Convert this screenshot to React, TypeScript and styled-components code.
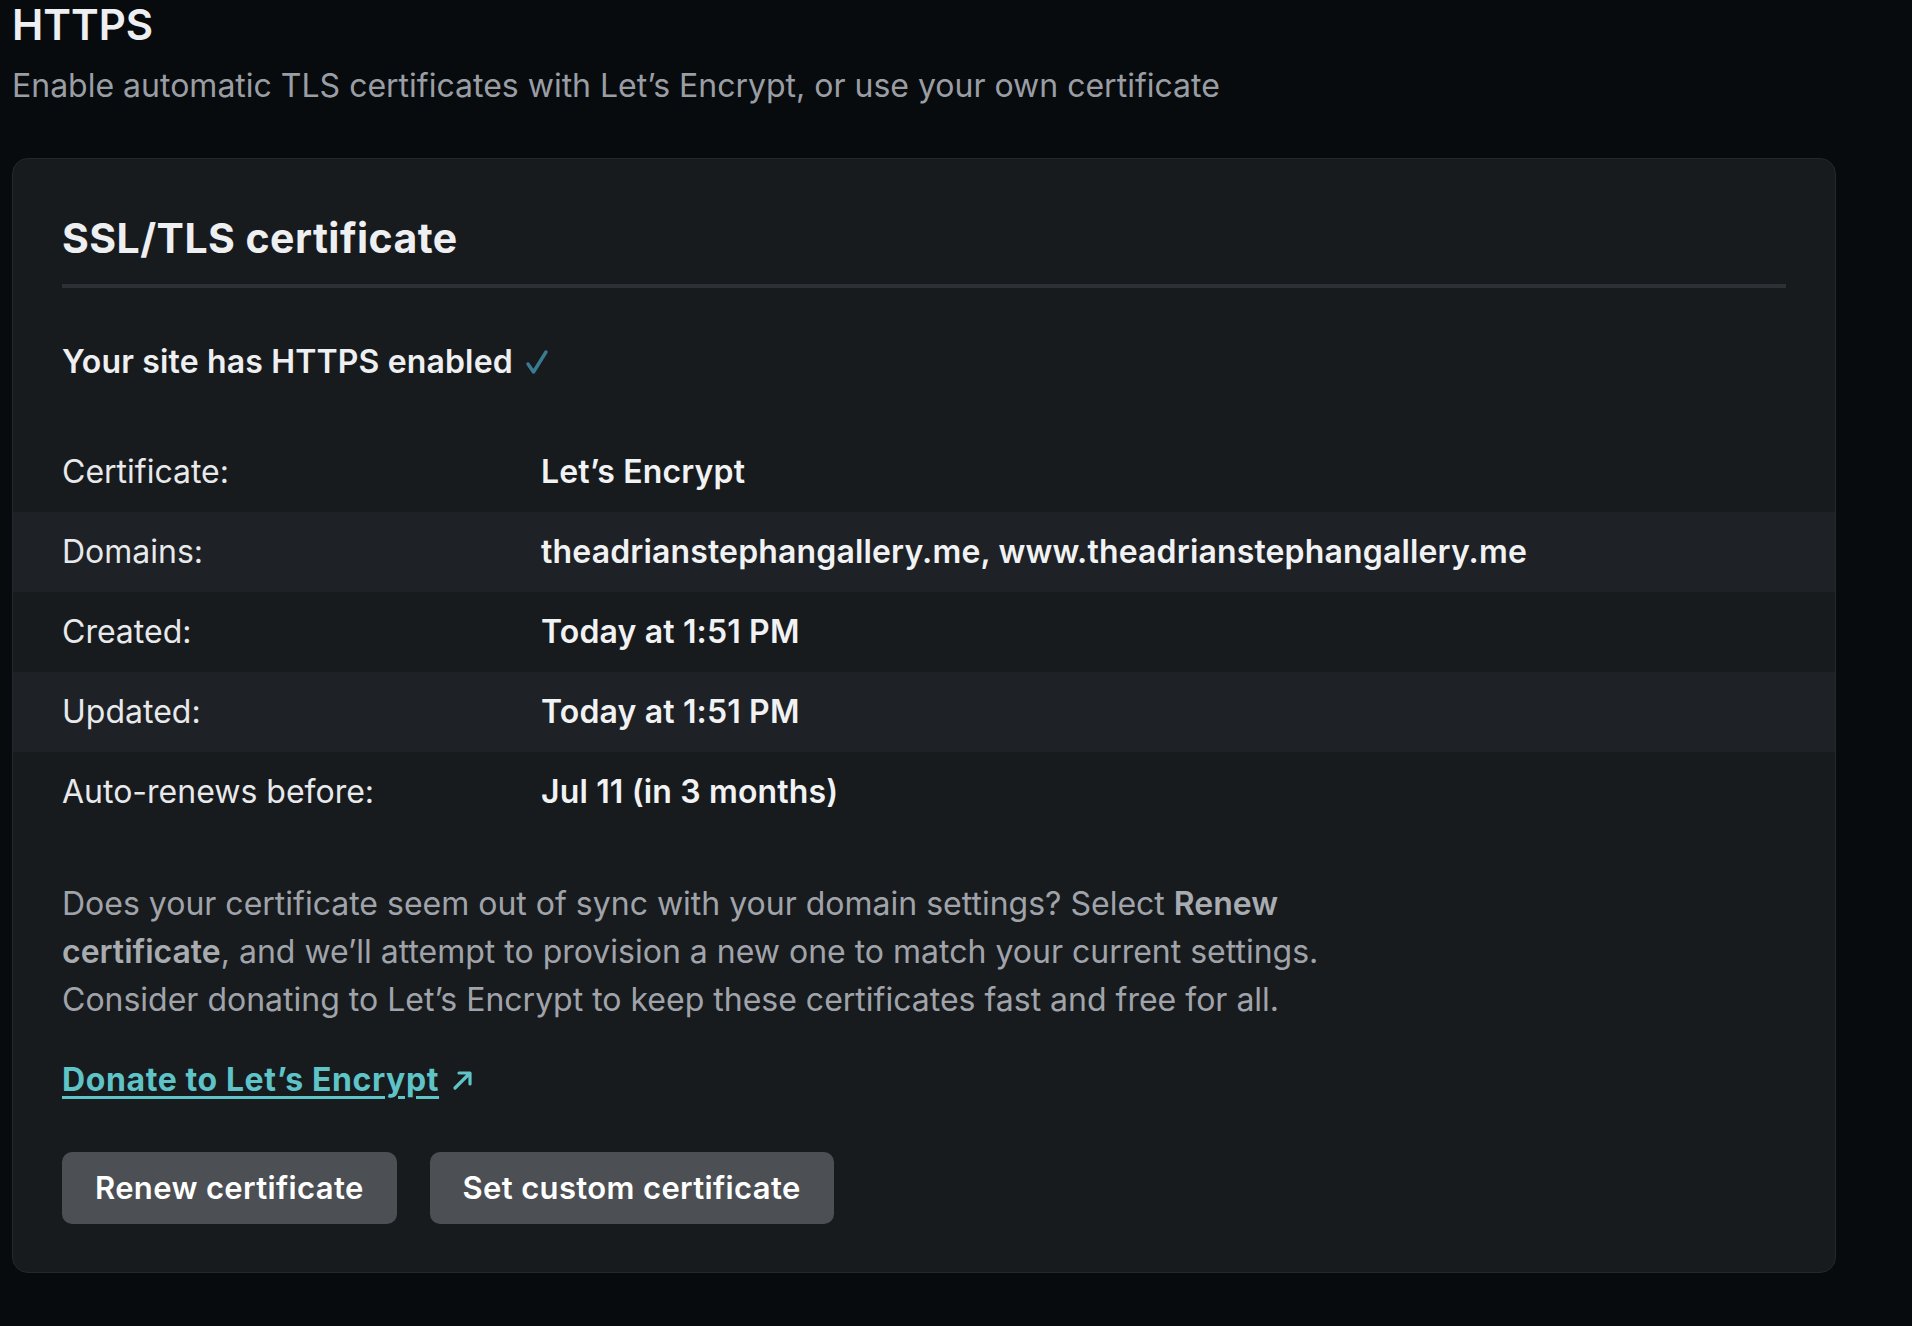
import React from "react";
import styled, { createGlobalStyle } from "styled-components";

const GlobalStyle = createGlobalStyle`
  html, body {
    margin: 0;
    padding: 0;
    background: #080b0e;
  }
  body {
    font-family: Inter, "Noto Sans", "Liberation Sans", sans-serif;
    color: #eeeff1;
    -webkit-font-smoothing: antialiased;
  }
  * { box-sizing: border-box; }
`;

const Page = styled.main`
  min-height: 1326px;
  padding: 0 76px 0 12px;
  background: #080b0e;
`;

const PageTitle = styled.h1`
  margin: 0;
  font-size: 42px;
  line-height: 50px;
  font-weight: 600;
  color: #eeeff1;
`;

const PageSubtitle = styled.p`
  margin: 12px 0 0;
  font-size: 32px;
  line-height: 48px;
  font-weight: 400;
  color: #9a9ea4;
`;

const Card = styled.section`
  margin-top: 48px;
  background: #181b1e;
  border: 1px solid #24272b;
  border-radius: 16px;
  padding: 56px 49px 48px;
`;

const CardTitle = styled.h2`
  margin: 0;
  font-size: 41px;
  line-height: 46px;
  font-weight: 700;
  letter-spacing: 0.45px;
  color: #eeeff1;
`;

const Divider = styled.hr`
  margin: 23px 0 0;
  border: none;
  height: 4px;
  background: #2d3034;
`;

const Status = styled.p`
  margin: 50px 0 0;
  display: flex;
  align-items: center;
  font-size: 32px;
  line-height: 48px;
  font-weight: 600;
  letter-spacing: 0.15px;
  color: #eeeff1;
`;

const CheckIcon = styled.svg`
  width: 24px;
  height: 26px;
  margin-left: 12px;
  flex: none;
`;

const DetailList = styled.dl`
  margin: 46px -49px 0;
  padding: 0;
`;

const DetailRow = styled.div<{ $striped?: boolean }>`
  display: grid;
  grid-template-columns: 479px 1fr;
  align-items: center;
  height: 80px;
  padding: 0 49px;
  background: ${(p) => (p.$striped ? "#1e2125" : "transparent")};
`;

const DetailLabel = styled.dt`
  margin: 0;
  font-size: 32px;
  line-height: 48px;
  font-weight: 400;
  color: #e8e9eb;
`;

const DetailValue = styled.dd`
  margin: 0;
  font-size: 32px;
  line-height: 48px;
  font-weight: 600;
  letter-spacing: 0.15px;
  color: #f1f2f3;
`;

const Explanation = styled.p`
  margin: 48px 0 0;
  max-width: 1340px;
  font-size: 32px;
  line-height: 48px;
  font-weight: 400;
  color: #a0a4aa;

  strong {
    font-weight: 600;
    color: #a8acb1;
  }
`;

const LinkLine = styled.div`
  display: flex;
  margin-top: 32px;
`;

const DonateLink = styled.a`
  display: inline-flex;
  align-items: center;
  gap: 12px;
  font-size: 32px;
  line-height: 48px;
  font-weight: 700;
  letter-spacing: 0.6px;
  color: #5ec4c8;
  text-decoration: none;
`;

const LinkText = styled.span`
  text-decoration: underline;
  text-decoration-thickness: 3px;
  text-underline-offset: 5px;
`;

const ArrowIcon = styled.svg`
  width: 24px;
  height: 24px;
  flex: none;
`;

const ButtonRow = styled.div`
  margin-top: 48px;
  display: flex;
  gap: 33px;
`;

const Button = styled.button`
  height: 72px;
  padding: 0 33px;
  border: none;
  border-radius: 10px;
  background: #4c4f54;
  color: #ffffff;
  font-family: inherit;
  font-size: 31px;
  font-weight: 600;
  letter-spacing: 0.35px;
  line-height: 72px;
  cursor: pointer;
`;

const details: { label: string; value: string }[] = [
  { label: "Certificate:", value: "Let\u2019s Encrypt" },
  {
    label: "Domains:",
    value: "theadrianstephangallery.me, www.theadrianstephangallery.me",
  },
  { label: "Created:", value: "Today at 1:51 PM" },
  { label: "Updated:", value: "Today at 1:51 PM" },
  { label: "Auto-renews before:", value: "Jul 11 (in 3 months)" },
];

export default function App() {
  return (
    <>
      <GlobalStyle />
      <Page>
        <PageTitle>HTTPS</PageTitle>
        <PageSubtitle>
          Enable automatic TLS certificates with Let’s Encrypt, or use your own
          certificate
        </PageSubtitle>
        <Card>
          <CardTitle>SSL/TLS certificate</CardTitle>
          <Divider />
          <Status>
            Your site has HTTPS enabled
            <CheckIcon viewBox="0 0 24 26" fill="none">
              <path
                d="M3 15 L8.5 23 L21 3"
                stroke="#3a7b93"
                strokeWidth="3.4"
                strokeLinecap="round"
                strokeLinejoin="round"
              />
            </CheckIcon>
          </Status>
          <DetailList>
            {details.map((d, i) => (
              <DetailRow key={d.label} $striped={i % 2 === 1}>
                <DetailLabel>{d.label}</DetailLabel>
                <DetailValue>{d.value}</DetailValue>
              </DetailRow>
            ))}
          </DetailList>
          <Explanation>
            Does your certificate seem out of sync with your domain settings?
            Select <strong>Renew certificate</strong>, and we’ll attempt to
            provision a new one to match your current settings. Consider
            donating to Let’s Encrypt to keep these certificates fast and free
            for all.
          </Explanation>
          <LinkLine>
            <DonateLink href="#">
              <LinkText>Donate to Let’s Encrypt</LinkText>
              <ArrowIcon viewBox="0 0 24 24" fill="none">
                <path
                  d="M4 20 L18 6 M8 5 H19 V16"
                  stroke="#5ec4c8"
                  strokeWidth="3.2"
                  strokeLinecap="round"
                  strokeLinejoin="round"
                />
              </ArrowIcon>
            </DonateLink>
          </LinkLine>
          <ButtonRow>
            <Button>Renew certificate</Button>
            <Button>Set custom certificate</Button>
          </ButtonRow>
        </Card>
      </Page>
    </>
  );
}
